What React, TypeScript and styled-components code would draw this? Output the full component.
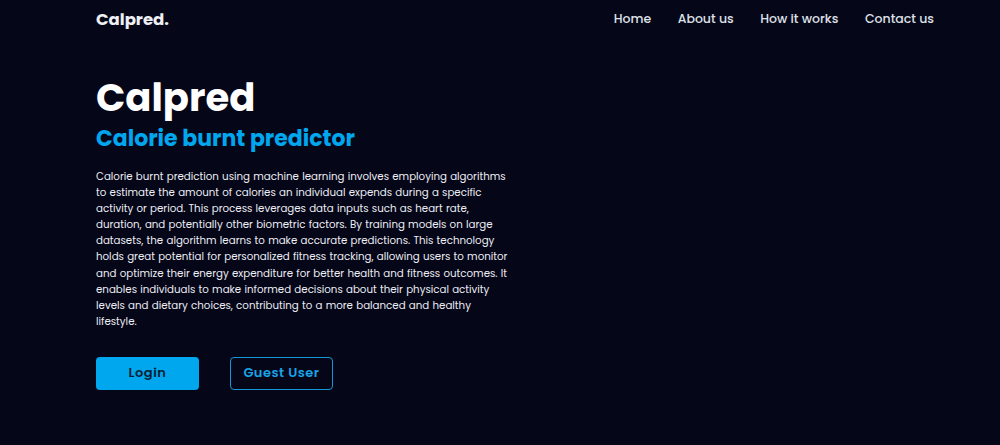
import React from "react";
import styled, { createGlobalStyle } from "styled-components";

const Global = createGlobalStyle`
  html, body { margin: 0; padding: 0; background: #060619; }
  body { font-family: "Poppins", "Open Sans", sans-serif; color: #fff; }
  * { box-sizing: border-box; }
`;

const Page = styled.div`
  min-height: 445px;
  background: #060619;
  padding: 0 66px 0 96px;
`;

const Nav = styled.nav`
  height: 38px;
  display: flex;
  align-items: center;
  justify-content: space-between;
`;

const Logo = styled.div`
  font-size: 16.5px;
  font-weight: 700;
  color: #eef0f5;
`;

const Links = styled.ul`
  list-style: none;
  margin: 0;
  padding: 0;
  display: flex;
  gap: 26.5px;
`;

const LinkItem = styled.li`
  font-size: 12.5px;
  font-weight: 500;
  color: #dfe1e8;
`;

const Hero = styled.section`
  padding-top: 38px;
  width: 412px;
`;

const Title = styled.h1`
  margin: 0;
  font-size: 38.5px;
  font-weight: 700;
  line-height: 44px;
  color: #fff;
`;

const Subtitle = styled.h2`
  margin: 5px 0 0;
  font-size: 22px;
  font-weight: 700;
  line-height: 28px;
  color: #00a6ee;
`;

const Text = styled.p`
  margin: 16px 0 0;
  font-size: 10.25px;
  word-spacing: 0.5px;
  line-height: 16.1px;
  color: #eceef3;
`;

const Actions = styled.div`
  display: flex;
  gap: 31px;
  margin-top: 27px;
`;

const Button = styled.button<{ $outline?: boolean }>`
  width: 103px;
  height: 33px;
  border-radius: 4px;
  font-family: inherit;
  font-size: 13px;
  font-weight: 600;
  letter-spacing: 0.5px;
  cursor: pointer;
  background: ${(p) => (p.$outline ? "transparent" : "#00a6ee")};
  color: ${(p) => (p.$outline ? "#1aa3e6" : "#0a1e33")};
  border: ${(p) => (p.$outline ? "1.5px solid #1596d6" : "none")};
`;

export default function App() {
  return (
    <>
      <Global />
      <Page>
        <Nav>
          <Logo>Calpred.</Logo>
          <Links>
            <LinkItem>Home</LinkItem>
            <LinkItem>About us</LinkItem>
            <LinkItem>How it works</LinkItem>
            <LinkItem>Contact us</LinkItem>
          </Links>
        </Nav>
        <Hero>
          <Title>Calpred</Title>
          <Subtitle>Calorie burnt predictor</Subtitle>
          <Text>
            Calorie burnt prediction using machine learning involves employing algorithms to estimate the
            amount of calories an individual expends during a specific activity or period. This process
            leverages data inputs such as heart rate, duration, and potentially other biometric factors. By
            training models on large datasets, the algorithm learns to make accurate predictions. This
            technology holds great potential for personalized fitness tracking, allowing users to monitor
            and optimize their energy expenditure for better health and fitness outcomes. It enables
            individuals to make informed decisions about their physical activity levels and dietary choices,
            contributing to a more balanced and healthy lifestyle.
          </Text>
          <Actions>
            <Button>Login</Button>
            <Button $outline>Guest User</Button>
          </Actions>
        </Hero>
      </Page>
    </>
  );
}
